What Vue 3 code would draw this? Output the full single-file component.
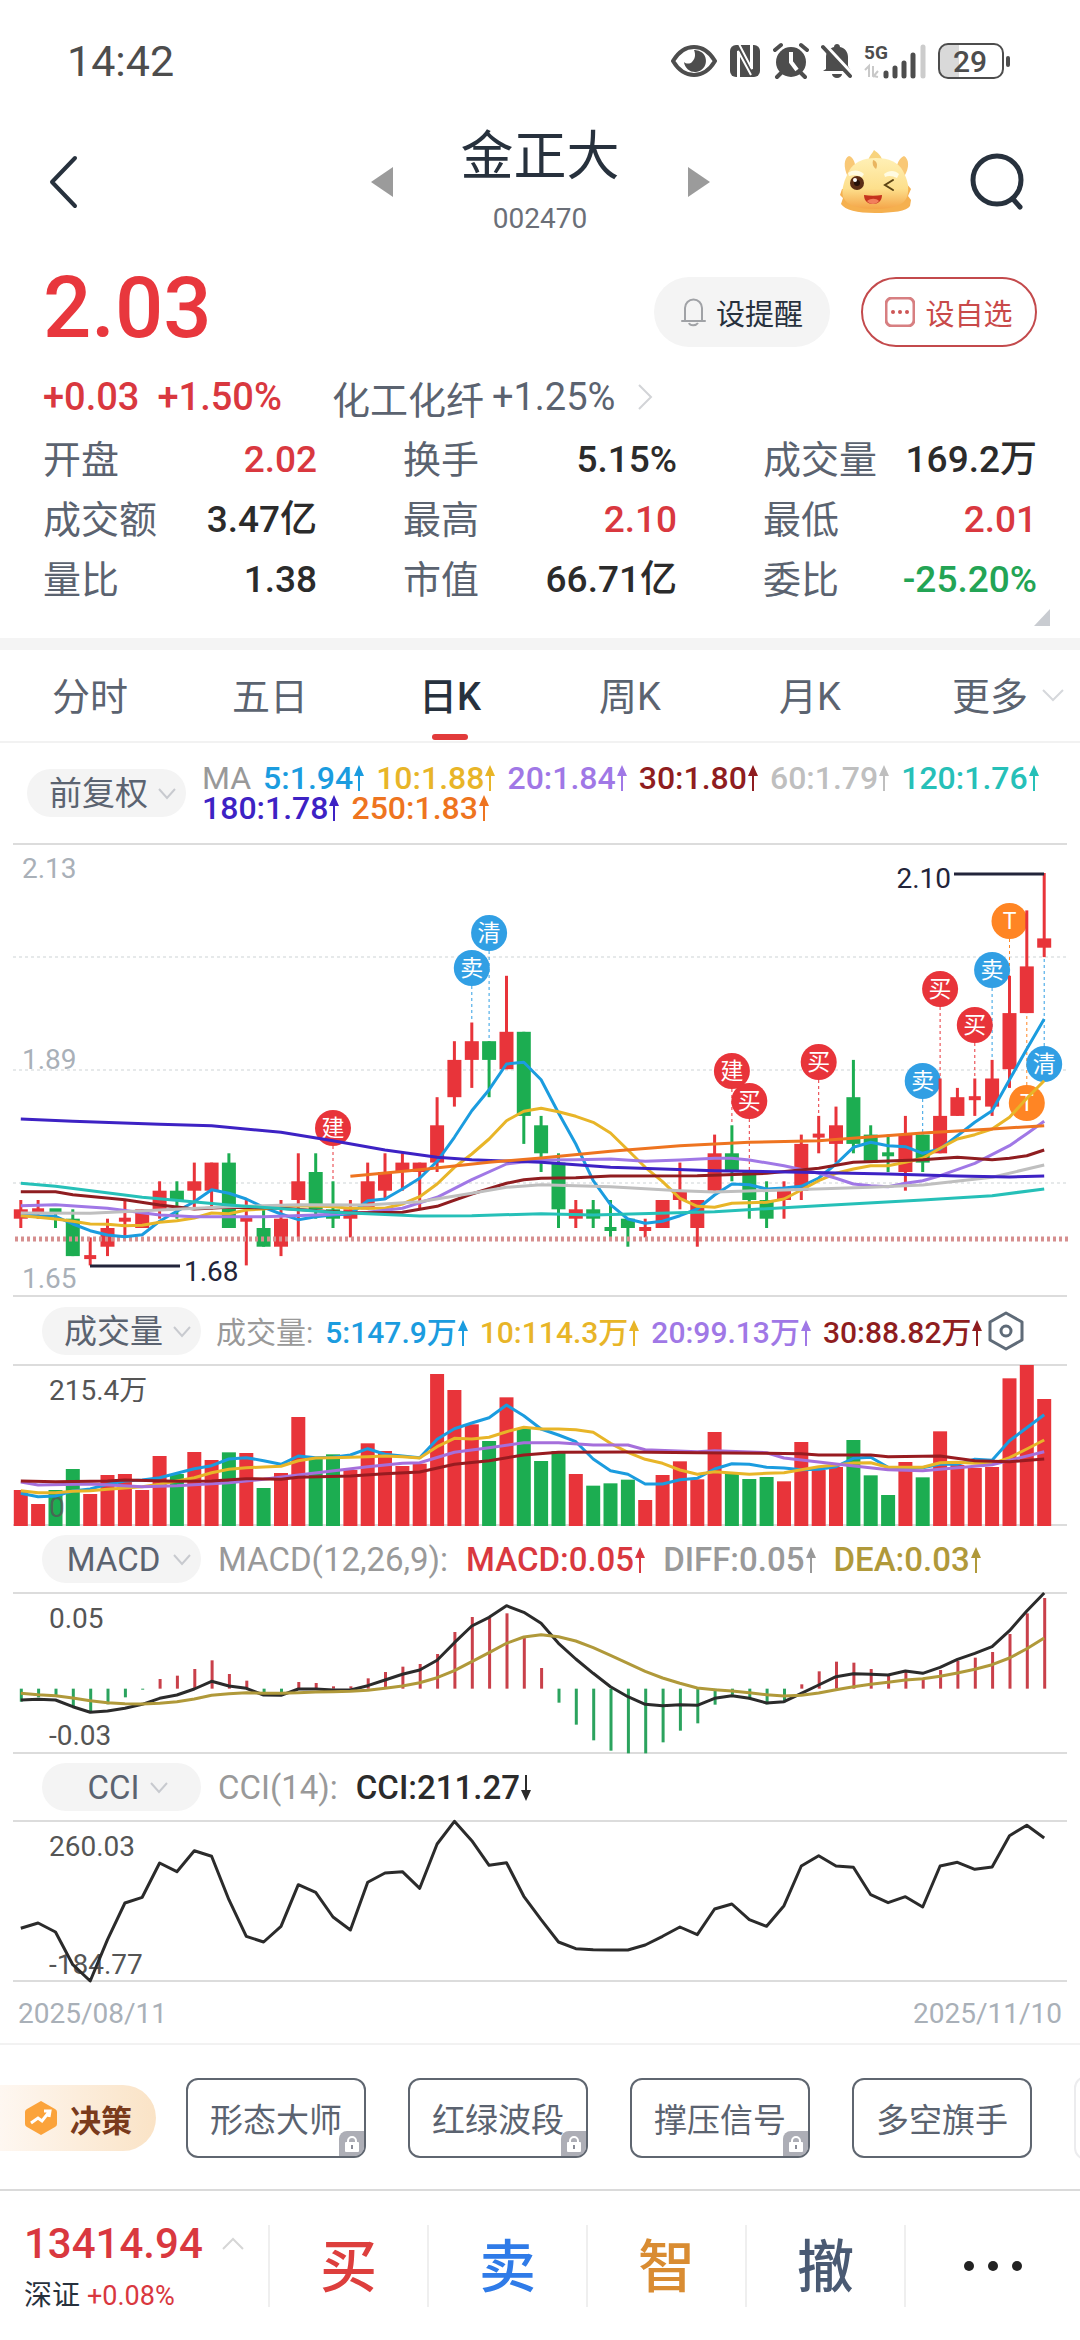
<script setup>
const RED = '#e8343a'
const GREEN = '#1cad51'

const stats = [
  { label: '开盘', value: '2.02', tone: 'up' },
  { label: '换手', value: '5.15%' },
  { label: '成交量', value: '169.2万' },
  { label: '成交额', value: '3.47亿' },
  { label: '最高', value: '2.10', tone: 'up' },
  { label: '最低', value: '2.01', tone: 'up' },
  { label: '量比', value: '1.38' },
  { label: '市值', value: '66.71亿' },
  { label: '委比', value: '-25.20%', tone: 'down' },
]

const tabs = ['分时', '五日', '日K', '周K', '月K', '更多']

const maLegend = [
  [
    { text: '5:1.94', color: '#1b9cdf' },
    { text: '10:1.88', color: '#e8b528' },
    { text: '20:1.84', color: '#a078e6' },
    { text: '30:1.80', color: '#8f1d20' },
    { text: '60:1.79', color: '#bfbfbf' },
    { text: '120:1.76', color: '#26c0b8' },
  ],
  [
    { text: '180:1.78', color: '#3d22c4' },
    { text: '250:1.83', color: '#ee7420' },
  ],
]
const volLegend = [
  { text: '5:147.9万', color: '#1b9cdf' },
  { text: '10:114.3万', color: '#e8b528' },
  { text: '20:99.13万', color: '#a078e6' },
  { text: '30:88.82万', color: '#8f1d20' },
]
const macdLegend = [
  { text: 'MACD:0.05', color: '#d9383f' },
  { text: 'DIFF:0.05', color: '#999999' },
  { text: 'DEA:0.03', color: '#b0993a' },
]

/* Sixty sessions share one horizontal axis. */
const x = (i) => Math.round((20.8 + 17.345 * i) * 10) / 10
/* Price in cents to plot height. */
const py = (cents) => Math.round((30 + (210 - cents) * 9.343) * 10) / 10

/* direction, body top, body bottom, high, low (cents) */
const candles = [
  ['R', 174, 173, 175, 172], ['R', 174, 174, 175, 173], ['G', 174, 174, 174, 172], ['G', 173, 169, 174, 169],
  ['R', 169, 169, 171, 168], ['R', 172, 170, 173, 169], ['R', 173, 173, 175, 171], ['R', 174, 172, 174, 172],
  ['R', 176, 174, 177, 173], ['G', 176, 175, 177, 173], ['R', 177, 176, 179, 174], ['R', 179, 176, 179, 174],
  ['G', 179, 172, 180, 172], ['R', 173, 173, 175, 168], ['G', 172, 170, 174, 170], ['R', 173, 170, 175, 169],
  ['R', 177, 175, 180, 171], ['G', 178, 174, 180, 173], ['G', 174, 173, 177, 172], ['R', 174, 173, 175, 171],
  ['R', 177, 174, 179, 174], ['R', 178, 176, 180, 175], ['R', 179, 178, 180, 176], ['R', 179, 178, 179, 174],
  ['R', 183, 179, 186, 178], ['R', 190, 186, 192, 185], ['R', 192, 190, 194, 187], ['G', 192, 190, 192, 186],
  ['R', 193, 189, 199, 189], ['G', 193, 184, 193, 181], ['G', 183, 180, 184, 178], ['G', 179, 174, 180, 172],
  ['R', 174, 173, 175, 172], ['G', 174, 173, 175, 172], ['G', 172, 172, 175, 171], ['G', 173, 172, 173, 170],
  ['R', 172, 172, 173, 171], ['R', 175, 172, 175, 172], ['R', 176, 175, 179, 174], ['R', 175, 172, 175, 170],
  ['R', 180, 176, 182, 176], ['G', 180, 178, 183, 177], ['G', 178, 175, 178, 173], ['G', 175, 173, 177, 172],
  ['R', 176, 175, 177, 173], ['R', 181, 176, 182, 175], ['R', 182, 182, 184, 180], ['R', 183, 181, 185, 179],
  ['G', 186, 181, 190, 180], ['G', 182, 179, 183, 179], ['G', 180, 180, 182, 178], ['R', 182, 178, 184, 176],
  ['G', 182, 179, 182, 178], ['R', 184, 180, 188, 180], ['R', 186, 184, 187, 184], ['R', 186, 186, 188, 184],
  ['R', 188, 185, 190, 184], ['R', 195, 189, 199, 187], ['R', 200, 195, 206, 195], ['R', 203, 202, 210, 201],
].map(([dir, top, bottom, high, low], i) => {
  const doji = top === bottom
  return {
    i,
    color: dir === 'R' ? RED : GREEN,
    bodyX: x(i) - (doji ? 6 : 7),
    bodyW: doji ? 12 : 14,
    bodyY: doji ? py(top) - 1 : py(top),
    bodyH: doji ? 4 : py(bottom) - py(top),
    wickY: py(high),
    wickH: py(low) - py(high),
  }
})

/* Series are sampled in thirds of a unit; `zero` is the sample at the plot's top edge. */
const points = (samples, zero) =>
  samples
    .map((s, i) => (Array.isArray(s) ? s : [i, s]))
    .map(([i, v]) => `${x(i)},${((v - zero) / 3).toFixed(1)}`)
    .join(' ')

const priceLines = [
  { color: '#1b9cdf', pts: [1157, 1160, 1162, 1185, 1205, 1218, 1223, 1217, 1177, 1147, 1118, 1082, 1093, 1110, 1135, 1155, 1172, 1163, 1158, 1155, 1115, 1110, 1080, 1048, 997, 925, 845, 782, 705, 700, 752, 852, 945, 1055, 1127, 1170, 1183, 1177, 1160, 1140, 1098, 1065, 1067, 1080, 1077, 1072, 1047, 1005, 955, 940, 950, 953, 973, 960, 920, 880, 845, 752, 660, 570] },
  { color: '#e8b528', pts: [1160, 1165, 1170, 1177, 1185, 1186, 1190, 1189, 1180, 1175, 1167, 1152, 1154, 1143, 1140, 1132, 1130, 1131, 1133, 1138, 1138, 1138, 1125, 1103, 1065, 1015, 975, 930, 875, 847, 838, 848, 862, 880, 912, 963, 1015, 1058, 1108, 1132, 1135, 1123, 1121, 1120, 1110, 1083, 1055, 1033, 1020, 1010, 1010, 1000, 988, 958, 930, 917, 900, 865, 808, 755] },
  { color: '#a078e6', pts: [[0, 1130], [2, 1127], [5, 1138], [8, 1158], [10, 1163], [14, 1163], [17, 1158], [20, 1150], [22, 1138], [24, 1105], [26, 1052], [28, 1005], [30, 993], [32, 992], [34, 990], [36, 997], [38, 993], [40, 988], [41, 988], [42, 993], [44, 1010], [46, 1033], [47, 1048], [48, 1065], [49, 1070], [50, 1073], [51, 1063], [52, 1055], [53, 1040], [55, 1003], [57, 950], [58, 914], [59, 877]] },
  { color: '#8f1d20', pts: [[0, 1088], [2, 1088], [3, 1097], [6, 1112], [8, 1128], [10, 1140], [12, 1135], [15, 1138], [19, 1152], [22, 1150], [24, 1132], [26, 1095], [28, 1063], [29, 1052], [30, 1048], [32, 1046], [34, 1041], [39, 1040], [43, 1033], [46, 1018], [48, 1000], [52, 992], [54, 985], [56, 992], [57, 988], [58, 980], [59, 963]] },
  { color: '#bfbfbf', pts: [[0, 1152], [4, 1153], [8, 1143], [12, 1133], [16, 1127], [20, 1128], [23, 1118], [26, 1093], [28, 1075], [30, 1067], [34, 1073], [38, 1085], [40, 1089], [44, 1083], [49, 1075], [52, 1068], [56, 1045], [59, 1008]] },
  { color: '#26c0b8', pts: [[0, 1063], [2, 1072], [7, 1105], [12, 1128], [18, 1150], [23, 1161], [26, 1160], [30, 1154], [33, 1158], [40, 1148], [46, 1130], [52, 1113], [56, 1100], [59, 1080]] },
  { color: '#3d22c4', pts: [[0, 870], [3, 877], [8, 886], [11, 890], [15, 910], [18, 935], [21, 963], [24, 985], [26, 992], [30, 1000], [34, 1015], [40, 1025], [45, 1030], [50, 1035], [54, 1041], [57, 1044], [59, 1041]] },
  { color: '#ee7420', pts: [[19, 1042], [23, 1022], [27, 1000], [30, 987], [34, 967], [38, 950], [42, 940], [46, 935], [52, 912], [56, 900], [59, 890]] },
].map((l) => ({ color: l.color, points: points(l.pts, 42) }))

/* session, badge centre, guide end */
const BLUE = '#319fe4'
const ORANGE = '#ff8524'
const markers = [
  { i: 18, text: '建', color: RED, y: 285, to: 339 },
  { i: 26, text: '卖', color: BLUE, y: 125, to: 179 },
  { i: 27, text: '清', color: BLUE, y: 90, to: 198 },
  { i: 41, text: '建', color: RED, y: 228, to: 282 },
  { i: 42, text: '买', color: RED, y: 258, to: 330 },
  { i: 46, text: '买', color: RED, y: 219, to: 273 },
  { i: 52, text: '卖', color: BLUE, y: 238, to: 292 },
  { i: 53, text: '买', color: RED, y: 146, to: 235 },
  { i: 55, text: '买', color: RED, y: 182, to: 235 },
  { i: 56, text: '卖', color: BLUE, y: 127, to: 217 },
  { i: 57, text: 'T', color: ORANGE, y: 78, to: 133 },
  { i: 58, text: 'T', color: ORANGE, y: 260, to: 169 },
  { i: 59, text: '清', color: BLUE, y: 221, to: 114 },
]

const volBars = [600, 642, 600, 537, 612, 555, 552, 600, 498, 552, 486, 510, 487, 489, 594, 549, 381, 505, 493, 540, 460, 483, 528, 521, 252, 300, 403, 453, 322, 416, 513, 483, 552, 587, 580, 569, 630, 555, 514, 568, 426, 552, 567, 561, 574, 456, 540, 531, 450, 556, 615, 516, 562, 424, 525, 534, 531, 265, 225, 327].map(
  (v, i) => ({ i, x: x(i) - 7, y: (v - 225) / 3, h: 161 - (v - 225) / 3, color: candles[i].color }),
)
const volLines = [
  { color: '#1b9cdf', pts: [610, 620, 618, 603, 597, 583, 573, 570, 563, 550, 536, 527, 507, 503, 512, 523, 498, 503, 502, 495, 476, 493, 498, 503, 448, 416, 399, 383, 345, 377, 417, 435, 455, 507, 542, 553, 582, 582, 569, 565, 537, 521, 523, 532, 534, 539, 538, 530, 505, 502, 532, 533, 533, 523, 523, 508, 511, 452, 413, 374] },
  { color: '#e8b528', pts: [602, 608, 608, 604, 602, 598, 594, 590, 583, 573, 563, 548, 538, 533, 531, 529, 512, 504, 503, 502, 500, 498, 500, 504, 470, 445, 447, 442, 425, 412, 417, 417, 419, 427, 460, 487, 508, 520, 540, 553, 545, 549, 553, 550, 548, 539, 530, 525, 519, 518, 532, 532, 532, 518, 517, 520, 521, 503, 477, 450] },
  { color: '#a56fdb', pts: [[0, 576], [1, 585], [4, 582], [7, 590], [9, 587], [12, 578], [14, 568], [16, 555], [20, 530], [22, 520], [23, 518], [25, 487], [27, 473], [29, 458], [31, 458], [33, 465], [35, 465], [36, 479], [39, 485], [40, 482], [43, 488], [44, 504], [47, 522], [50, 539], [52, 542], [54, 533], [56, 524], [59, 485]] },
  { color: '#981b20', pts: [[0, 573], [2, 575], [5, 573], [6, 570], [9, 574], [11, 573], [13, 566], [15, 568], [16, 562], [19, 558], [21, 551], [23, 546], [25, 523], [27, 512], [29, 495], [31, 487], [35, 486], [39, 488], [43, 490], [45, 491], [46, 495], [49, 495], [50, 500], [53, 498], [55, 512], [57, 515], [59, 507]] },
].map((l) => ({ color: l.color, points: points(l.pts, 225) }))

const macdBars = [1235, 1222, 1220, 1250, 1265, 1243, 1222, 1199, 1167, 1157, 1137, 1111, 1152, 1172, 1214, 1215, 1176, 1179, 1189, 1189, 1165, 1146, 1130, 1122, 1092, 1026, 981, 982, 970, 1044, 1134, 1238, 1304, 1351, 1382, 1390, 1390, 1357, 1322, 1300, 1244, 1214, 1228, 1243, 1237, 1183, 1144, 1115, 1118, 1137, 1155, 1146, 1165, 1140, 1112, 1103, 1086, 1032, 970, 924].map(
  (v, i) => {
    const zero = (1196 - 909) / 3
    const end = (v - 909) / 3
    return { i, x: x(i) - 1, y: Math.min(zero, end), h: Math.abs(zero - end), color: end < zero ? '#c9404a' : '#2ba35e' }
  },
)
const diffLine = points([1230, 1228, 1230, 1250, 1267, 1263, 1255, 1243, 1225, 1215, 1197, 1174, 1188, 1195, 1215, 1216, 1197, 1197, 1200, 1200, 1187, 1170, 1153, 1140, 1111, 1058, 1008, 982, 947, 967, 1000, 1060, 1107, 1150, 1190, 1220, 1243, 1247, 1244, 1246, 1225, 1217, 1225, 1239, 1235, 1210, 1185, 1160, 1151, 1153, 1155, 1143, 1150, 1132, 1108, 1090, 1070, 1022, 963, 909], 909)
const deaLine = points([1210, 1214, 1217, 1224, 1232, 1238, 1241, 1242, 1240, 1235, 1227, 1216, 1211, 1208, 1210, 1210, 1208, 1206, 1205, 1204, 1201, 1195, 1188, 1178, 1163, 1142, 1115, 1088, 1060, 1041, 1034, 1040, 1053, 1073, 1096, 1120, 1144, 1164, 1180, 1194, 1199, 1203, 1208, 1214, 1218, 1216, 1209, 1199, 1190, 1183, 1177, 1170, 1166, 1159, 1149, 1138, 1124, 1104, 1076, 1044], 909)
const cciLine = points([506, 490, 517, 615, 664, 540, 430, 413, 310, 336, 273, 290, 420, 530, 547, 500, 375, 398, 472, 511, 368, 340, 336, 386, 253, 185, 243, 317, 309, 410, 480, 547, 567, 570, 571, 571, 556, 530, 502, 525, 448, 433, 480, 500, 438, 319, 288, 319, 323, 405, 429, 411, 442, 319, 308, 329, 322, 228, 197, 235], 184)

const tools = [
  { name: '形态大师', locked: true },
  { name: '红绿波段', locked: true },
  { name: '撑压信号', locked: true },
  { name: '多空旗手', locked: false },
]
const actions = [
  { name: '买', color: '#dd3f3d' },
  { name: '卖', color: '#2f7be8' },
  { name: '智', color: '#d98c32' },
  { name: '撤', color: '#4a5a73' },
]
</script>

<template>
  <div class="page">
    <div class="status">
      <span class="clock">14:42</span>
      <div class="status-icons">
        <svg width="46" height="38" viewBox="0 0 46 38">
          <path d="M2 19C8 9 15 5 23 5s15 4 21 14c-6 10-13 14-21 14S8 29 2 19z" fill="none" stroke="#4d4d4d" stroke-width="4" />
          <path d="M23 8a11 11 0 1 1-10 12c2 2 6 2 8 0 3-3 4-7 2-12z" fill="#4d4d4d" />
        </svg>
        <svg width="32" height="38" viewBox="0 0 32 38">
          <rect x="1" y="3" width="30" height="32" rx="6" fill="#4d4d4d" />
          <path d="M9 36V9l13 24M10 2l13 25V2" fill="none" stroke="#fff" stroke-width="2" />
          <path d="M10 10v26M22 2v24" stroke="#fff" stroke-width="2" />
        </svg>
        <svg width="36" height="38" viewBox="0 0 36 38">
          <circle cx="18" cy="20" r="15" fill="#4d4d4d" />
          <path d="M2 8l6-5M34 8l-6-5M8 31l-4 4M28 31l4 4" stroke="#4d4d4d" stroke-width="4" stroke-linecap="round" />
          <path d="M18 10v10l6 8" fill="none" stroke="#fff" stroke-width="4" />
        </svg>
        <svg width="31" height="38" viewBox="0 0 31 38">
          <path d="M5 27V15C5 9 9 6 13 5c0-4 6-4 6 0 5 1 8 5 8 10v9l3 5H2z" fill="#4d4d4d" />
          <path d="M11 32h10a5 4 0 0 1-10 0z" fill="#4d4d4d" />
          <path d="M5 4l27 29" stroke="#fff" stroke-width="4" />
          <path d="M2 5l27 29" stroke="#4d4d4d" stroke-width="4" stroke-linecap="round" />
        </svg>
        <svg width="62" height="38" viewBox="0 0 62 38">
          <text x="0" y="17" font-size="19" font-weight="700" fill="#4d4d4d">5G</text>
          <path d="M1 28l4-4v11M14 35l-5-1V24M9 35l5-6" fill="none" stroke="#c9c9c9" stroke-width="2" />
          <path d="M22 31v3M31 26v8M40 21v13M49 13v21" stroke="#4d4d4d" stroke-width="5" stroke-linecap="round" />
          <path d="M59 5v29" stroke="#cccccc" stroke-width="5" stroke-linecap="round" />
        </svg>
        <svg width="73" height="38" viewBox="0 0 73 38">
          <path d="M10 2h11v34H10a8 8 0 0 1-8-8V10a8 8 0 0 1 8-8z" fill="#d9d9d9" />
          <rect x="1" y="2" width="64" height="34" rx="9" fill="none" stroke="#4d4d4d" stroke-width="2" />
          <rect x="68" y="14" width="4" height="11" rx="2" fill="#4d4d4d" />
          <text x="32" y="30" text-anchor="middle" font-size="30" font-weight="500" fill="#4d4d4d">29</text>
        </svg>
      </div>
    </div>

    <header class="header">
      <button class="icon-btn back" aria-label="返回">
        <svg width="32" height="56" viewBox="0 0 32 56"><path d="M27 4L4 28l23 24" fill="none" stroke="#27313d" stroke-width="4" stroke-linecap="round" stroke-linejoin="round" /></svg>
      </button>
      <div class="switcher">
        <button class="icon-btn" aria-label="上一只">
          <svg width="22" height="30" viewBox="0 0 22 30"><path d="M22 0v30L0 15z" fill="#9b9b9b" /></svg>
        </button>
        <div class="name">
          <h1>金正大</h1>
          <p>002470</p>
        </div>
        <button class="icon-btn" aria-label="下一只">
          <svg width="22" height="30" viewBox="0 0 22 30"><path d="M0 0v30l22-15z" fill="#9b9b9b" /></svg>
        </button>
      </div>
      <div class="header-right">
        <button class="icon-btn" aria-label="助手">
          <svg width="74" height="66" viewBox="0 0 74 66">
            <defs>
              <linearGradient id="skin" x1="0" y1="0" x2="0" y2="1">
                <stop offset="0" stop-color="#fff0b5" />
                <stop offset="0.6" stop-color="#fddf8c" />
                <stop offset="1" stop-color="#f4a548" />
              </linearGradient>
            </defs>
            <path d="M3 40l-2 6 3 3-2 6c4 6 16 9 34 9s32-2 35-7l1-6-3-4 3-7-5-6z" fill="#f5b04f" />
            <path d="M9 28C4 18 5 9 10 7c4 1 6 6 7 13zM65 28c6-10 5-18 0-21-5 2-7 8-8 14z" fill="#f9c876" />
            <path d="M29 14c0-6 4-9 6-13 4 3 8 6 9 13z" fill="#f8d37c" />
            <path d="M10 22c5-9 14-13 27-13s22 4 27 13c4 8 7 16 4 26-3 8-14 12-31 12S8 57 4 48c-2-9 2-18 6-26z" fill="url(#skin)" />
            <path d="M34 11c4 1 5 5 3 9-3-2-4-5-3-9z" fill="#e9b55f" />
            <path d="M9 24c5-4 12-3 16 1l-2 3c-5-2-9-2-13-1zM45 25c5-4 11-4 15 0l-2 4c-4-2-8-3-12-1z" fill="#fffbe2" />
            <circle cx="18" cy="34" r="7" fill="#5b2d16" />
            <circle cx="18" cy="34" r="3" fill="#25100a" />
            <circle cx="16" cy="31" r="2" fill="#fff" />
            <path d="M54 31l-8 5 8 5" fill="none" stroke="#5c4414" stroke-width="2" stroke-linecap="round" />
            <path d="M25 46c6 1 12 1 18 0 0 6-4 9-9 9s-9-3-9-9z" fill="#c5331d" />
            <path d="M28 52c4-3 9-3 12 0-3 4-9 4-12 0z" fill="#f27f5c" />
          </svg>
        </button>
        <button class="icon-btn" aria-label="搜索">
          <svg width="54" height="58" viewBox="0 0 54 58">
            <circle cx="27" cy="27" r="24" fill="none" stroke="#27313d" stroke-width="5" />
            <path d="M43 46l7 8" stroke="#27313d" stroke-width="5" stroke-linecap="round" />
          </svg>
        </button>
      </div>
    </header>

    <section class="quote">
      <div class="price-row">
        <strong class="price">2.03</strong>
        <div class="price-actions">
          <button class="round-btn grey">
            <svg width="25" height="30" viewBox="0 0 25 30">
              <path d="M1 24h23M4 24V11a8 8 0 0 1 17 0v13" fill="none" stroke="#a0a2a6" stroke-width="2" stroke-linecap="round" />
              <path d="M8 26c1 3 7 3 9 0" fill="none" stroke="#a0a2a6" stroke-width="2" />
            </svg>
            设提醒
          </button>
          <button class="round-btn outline">
            <svg width="30" height="30" viewBox="0 0 30 30">
              <rect x="1" y="1" width="28" height="28" rx="6" fill="none" stroke="#d77f81" stroke-width="3" />
              <circle cx="8" cy="15" r="2" fill="#cd5656" /><circle cx="15" cy="15" r="2" fill="#cd5656" /><circle cx="22" cy="15" r="2" fill="#cd5656" />
            </svg>
            设自选
          </button>
        </div>
      </div>
      <div class="change-row">
        <span class="up">+0.03</span>
        <span class="up">+1.50%</span>
        <a href="#" class="sector">
          <span>化工化纤</span><span>+1.25%</span>
          <svg width="16" height="28" viewBox="0 0 16 28"><path d="M2 2l12 12L2 26" fill="none" stroke="#d2d4d7" stroke-width="2" /></svg>
        </a>
      </div>
      <dl class="stats">
        <div v-for="s in stats" :key="s.label" class="stat">
          <dt>{{ s.label }}</dt>
          <dd :class="s.tone">{{ s.value }}</dd>
        </div>
      </dl>
      <svg class="fold" width="16" height="17" viewBox="0 0 16 17"><path d="M16 0v17H0z" fill="#c9ccd1" /></svg>
    </section>

    <nav class="tabs">
      <button v-for="t in tabs" :key="t" class="tab" :class="{ active: t === '日K' }">
        {{ t }}
        <svg v-if="t === '更多'" class="tab-chevron" width="24" height="14" viewBox="0 0 24 14"><path d="M2 2l10 10L22 2" fill="none" stroke="#d6d8dc" stroke-width="2" /></svg>
      </button>
    </nav>

    <main>
      <div class="bar ma-bar">
        <div class="pill">
          <select aria-label="复权方式"><option>前复权</option></select>
          <svg width="20" height="12" viewBox="0 0 20 12"><path d="M2 1l8 9 8-9" fill="none" stroke="#c8cacf" stroke-width="2" /></svg>
        </div>
        <div class="ma-legend">
          <div v-for="(row, r) in maLegend" :key="r" class="legend-row">
            <span v-if="r === 0" class="muted">MA</span>
            <span v-for="m in row" :key="m.text" class="legend" :style="{ color: m.color }">{{ m.text }}<svg class="arrow" viewBox="0 0 10 26"><path d="M5 0l5 11H6v15H4V11H0z" fill="currentColor" /></svg></span>
          </div>
        </div>
      </div>

      <svg class="plot" viewBox="0 0 1080 454">
        <path d="M13 1H1067" stroke="#dcdcdc" stroke-width="2" />
        <path d="M13 453H1067" stroke="#dcdcdc" stroke-width="2" />
        <path d="M13 114H1067M13 227H1067M13 340H1067" stroke="#cdd3d5" stroke-width="1" stroke-dasharray="3 3" />
        <g class="scale" fill="#a9b0b8">
          <text x="22" y="35">2.13</text>
          <text x="22" y="226">1.89</text>
          <text x="22" y="445">1.65</text>
        </g>
        <g v-for="m in markers" :key="m.i">
          <path :d="`M${x(m.i)} ${m.y}V${m.to}`" :stroke="m.color" stroke-width="1" stroke-dasharray="3 3" />
        </g>
        <g v-for="m in markers" :key="'b' + m.i">
          <circle :cx="x(m.i)" :cy="m.y" r="18" :fill="m.color" />
          <text class="badge" :x="x(m.i)" :y="m.y + 8" text-anchor="middle">{{ m.text }}</text>
        </g>
        <g v-for="c in candles" :key="c.i" :fill="c.color">
          <rect :x="x(c.i) - 1.5" :y="c.wickY" width="3" :height="c.wickH" />
          <rect :x="c.bodyX" :y="c.bodyY" :width="c.bodyW" :height="c.bodyH" />
        </g>
        <path d="M15 396H1069" stroke="#d68f8f" stroke-width="5" stroke-dasharray="3 3" />
        <polyline v-for="l in priceLines" :key="l.color" :points="l.points" :stroke="l.color" class="line" />
        <path d="M90 423H180M954 31H1044" stroke="#22243a" stroke-width="3" />
        <g class="scale" fill="#22243a">
          <text x="184" y="438">1.68</text>
          <text x="951" y="45" text-anchor="end">2.10</text>
        </g>
      </svg>

      <div class="bar">
        <div class="pill">
          <select aria-label="副图一"><option>成交量</option></select>
          <svg width="20" height="12" viewBox="0 0 20 12"><path d="M2 1l8 9 8-9" fill="none" stroke="#c8cacf" stroke-width="2" /></svg>
        </div>
        <div class="legend-row vol">
          <span class="muted">成交量:</span>
          <span v-for="m in volLegend" :key="m.text" class="legend" :style="{ color: m.color }">{{ m.text }}<svg class="arrow" viewBox="0 0 10 26"><path d="M5 0l5 11H6v15H4V11H0z" fill="currentColor" /></svg></span>
        </div>
        <button class="icon-btn" aria-label="指标设置">
          <svg width="36" height="40" viewBox="0 0 36 40">
            <path d="M18 2l16 9v18l-16 9L2 29V11z" fill="none" stroke="#5f6b78" stroke-width="3" stroke-linejoin="round" />
            <circle cx="18" cy="20" r="5" fill="none" stroke="#5f6b78" stroke-width="3" />
          </svg>
        </button>
      </div>

      <svg class="plot" viewBox="0 0 1080 160">
        <path d="M13 0H1067M13 160H1067" stroke="#dcdcdc" stroke-width="2" />
        <text class="scale" x="49" y="35" fill="#555">215.4万</text>
        <rect v-for="b in volBars" :key="b.i" :x="b.x" :y="b.y" width="14" :height="b.h" :fill="b.color" />
        <text class="scale" x="49" y="152" fill="#555" fill-opacity="0.8">0</text>
        <polyline v-for="l in volLines" :key="l.color" :points="l.points" :stroke="l.color" class="line" />
      </svg>

      <div class="bar">
        <div class="pill">
          <select aria-label="副图二"><option>MACD</option></select>
          <svg width="20" height="12" viewBox="0 0 20 12"><path d="M2 1l8 9 8-9" fill="none" stroke="#c8cacf" stroke-width="2" /></svg>
        </div>
        <div class="legend-row wide">
          <span class="muted">MACD(12,26,9):</span>
          <span v-for="m in macdLegend" :key="m.text" class="legend" :style="{ color: m.color }">{{ m.text }}<svg class="arrow" viewBox="0 0 10 26"><path d="M5 0l5 11H6v15H4V11H0z" fill="currentColor" /></svg></span>
        </div>
      </div>

      <svg class="plot" viewBox="0 0 1080 160">
        <path d="M13 0H1067M13 160H1067" stroke="#dcdcdc" stroke-width="2" />
        <g class="scale" fill="#555">
          <text x="49" y="35">0.05</text>
          <text x="49" y="152">-0.03</text>
        </g>
        <rect v-for="b in macdBars" :key="b.i" :x="b.x" :y="b.y" width="3" :height="b.h" :fill="b.color" />
        <polyline :points="diffLine" stroke="#2b2b2b" class="line" />
        <polyline :points="deaLine" stroke="#b0993a" class="line" />
      </svg>

      <div class="bar">
        <div class="pill short">
          <select aria-label="副图三"><option>CCI</option></select>
          <svg width="20" height="12" viewBox="0 0 20 12"><path d="M2 1l8 9 8-9" fill="none" stroke="#c8cacf" stroke-width="2" /></svg>
        </div>
        <div class="legend-row wide">
          <span class="muted">CCI(14):</span>
          <span class="legend dark">CCI:211.27<svg class="arrow" viewBox="0 0 10 26"><path d="M5 26L0 15h4V0h2v15h4z" fill="currentColor" /></svg></span>
        </div>
      </div>

      <svg class="plot" viewBox="0 0 1080 160">
        <path d="M13 0H1067M13 160H1067" stroke="#dcdcdc" stroke-width="2" />
        <g class="scale" fill="#555">
          <text x="49" y="35">260.03</text>
          <text x="49" y="153">-184.77</text>
        </g>
        <polyline :points="cciLine" stroke="#2b2b2b" class="line" />
      </svg>

      <div class="dates"><time>2025/08/11</time><time>2025/11/10</time></div>
    </main>

    <div class="tools">
      <button class="decision">
        <svg width="34" height="36" viewBox="0 0 34 36">
          <path d="M17 1l14 8q2 1 2 3v12q0 2-2 3l-14 8L3 27q-2-1-2-3V12q0-2 2-3z" fill="#fba33b" />
          <path d="M7 23l7-5 4 3 7-9M20 11l6 0-1 6" fill="none" stroke="#fff" stroke-width="3" />
        </svg>
        决策
      </button>
      <button v-for="t in tools" :key="t.name" class="tool">
        {{ t.name }}
        <span v-if="t.locked" class="lock">
          <svg width="14" height="16" viewBox="0 0 14 16">
            <rect x="0" y="6" width="14" height="10" rx="1" fill="#fff" />
            <path d="M3 7V5a4 4 0 0 1 8 0v2" fill="none" stroke="#fff" stroke-width="2" />
            <path d="M7 9v4" stroke="#8b8d98" stroke-width="2" />
          </svg>
        </span>
      </button>
      <span class="peek"></span>
    </div>

    <footer class="dock">
      <button class="index">
        <span class="index-value">13414.94
          <svg width="24" height="14" viewBox="0 0 24 14"><path d="M2 12L12 2l10 10" fill="none" stroke="#d6d6d6" stroke-width="2" /></svg>
        </span>
        <span class="index-name">深证 <em>+0.08%</em></span>
      </button>
      <button v-for="a in actions" :key="a.name" class="action word" :style="{ color: a.color }">{{ a.name }}</button>
      <button class="action" aria-label="更多操作">
        <svg width="62" height="12" viewBox="0 0 62 12"><circle cx="7" cy="6" r="5" fill="#222" /><circle cx="31" cy="6" r="5" fill="#222" /><circle cx="55" cy="6" r="5" fill="#222" /></svg>
      </button>
    </footer>
  </div>
</template>

<style>
body {
  background: #fff;
}
</style>

<style scoped>
.page {
  font-family: Roboto, "Noto Sans CJK SC", sans-serif;
  color: #27313d;
  background: #fff;
  overflow: hidden;
}
button,
select {
  font: inherit;
  color: inherit;
  background: none;
  border: 0;
  padding: 0;
  margin: 0;
}
svg {
  display: block;
  flex: none;
}
.icon-btn {
  display: flex;
}
.up {
  color: #d9383f;
}

.status {
  display: flex;
  align-items: center;
  justify-content: space-between;
  height: 122px;
  padding: 0 69px 0 67px;
}
.clock {
  font-size: 43px;
  color: #4d4d4d;
}
.status-icons {
  display: flex;
  gap: 12px;
}

.header {
  display: grid;
  grid-template-columns: 1fr auto 1fr;
  align-items: center;
  padding: 0 48px;
}
.switcher {
  display: flex;
  align-items: center;
  gap: 68px;
}
.name {
  text-align: center;
}
.name h1 {
  margin: 0;
  padding-top: 2px;
  font-size: 53px;
  font-weight: 400;
  line-height: 66px;
}
.name p {
  margin: 6px 0 0;
  font-size: 28px;
  line-height: 46px;
  color: #6b6f78;
}
.header-right {
  display: flex;
  align-items: center;
  justify-content: flex-end;
  gap: 57px;
  padding-right: 8px;
}

.quote {
  position: relative;
  padding: 12px 43px 28px;
  border-bottom: 12px solid #f4f4f4;
}
.price-row {
  display: flex;
  justify-content: space-between;
  height: 116px;
}
.price {
  font-size: 85px;
  font-weight: 500;
  line-height: 108px;
  color: #e8373d;
}
.price-actions {
  display: flex;
  align-items: center;
  gap: 31px;
}
.round-btn {
  display: flex;
  align-items: center;
  justify-content: center;
  gap: 10px;
  width: 176px;
  height: 70px;
  border-radius: 35px;
  font-size: 29px;
}
.round-btn.grey {
  background: #f4f4f4;
}
.round-btn.outline {
  border: 2px solid #c34a4c;
  color: #c94a4a;
}
.change-row {
  display: flex;
  align-items: center;
  gap: 18px;
  height: 54px;
  font-size: 38px;
  white-space: nowrap;
}
.change-row .up {
  font-weight: 500;
}
.sector {
  display: flex;
  align-items: center;
  gap: 8px;
  margin-left: 32px;
  color: #5b6370;
  text-decoration: none;
}
.sector svg {
  margin-left: 14px;
}
.stats {
  display: grid;
  grid-template-columns: repeat(3, 1fr);
  column-gap: 86px;
  margin: 6px 0 0;
}
.stat {
  display: flex;
  justify-content: space-between;
  line-height: 60px;
  font-size: 38px;
  white-space: nowrap;
}
.stat dt {
  color: #5b6370;
}
.stat dd {
  margin: 0;
  font-size: 37px;
  font-weight: 500;
  color: #2b2b2b;
}
.stat dd.up {
  color: #d9383f;
}
.stat dd.down {
  color: #23a455;
}
.fold {
  position: absolute;
  right: 30px;
  bottom: 12px;
}

.tabs {
  display: flex;
  border-bottom: 2px solid #f2f2f2;
}
.tab {
  position: relative;
  flex: 1;
  height: 91px;
  padding-bottom: 4px;
  font-size: 38px;
  color: #5b6370;
}
.tab.active {
  color: #27313d;
  font-weight: 500;
}
.tab.active::after {
  content: "";
  position: absolute;
  left: calc(50% - 18px);
  bottom: 1px;
  width: 36px;
  height: 6px;
  border-radius: 3px;
  background: #e23b3b;
}
.tab-chevron {
  position: absolute;
  right: 15px;
  top: 38px;
}

.bar {
  display: flex;
  align-items: center;
  height: 68px;
  padding-left: 42px;
  white-space: nowrap;
}
.ma-bar {
  height: 100px;
  padding-left: 27px;
}
.pill {
  position: relative;
  flex: none;
  width: 159px;
}
.pill select {
  display: block;
  appearance: none;
  width: 100%;
  height: 48px;
  padding-right: 16px;
  border-radius: 24px;
  background: #f4f4f4;
  font-size: 33px;
  color: #5b6370;
  text-align: center;
  text-align-last: center;
}
.pill svg {
  position: absolute;
  right: 9px;
  top: 19px;
  pointer-events: none;
}
.pill.short svg {
  right: 32px;
}
.ma-legend {
  margin-left: 16px;
}
.legend-row {
  display: flex;
  align-items: center;
  gap: 12px;
  line-height: 30px;
  font-size: 32px;
}
.legend-row.vol {
  margin: 0 6px 0 15px;
  padding-top: 4px;
  font-size: 30px;
}
.legend-row.wide {
  gap: 18px;
  margin-left: 17px;
  padding-top: 2px;
  font-size: 33px;
}
.legend {
  display: flex;
  align-items: center;
  gap: 1px;
  font-weight: 500;
}
.arrow {
  width: 10px;
  height: 26px;
}
.muted {
  color: #999;
}
.dark {
  color: #2b2b2b;
}
.plot {
  width: 100%;
  height: auto;
  overflow: visible;
}
.scale {
  font-size: 28px;
}
.badge {
  font-size: 23px;
  fill: #fff;
}
.line {
  fill: none;
  stroke-width: 3;
  stroke-linejoin: round;
}
.dates {
  display: flex;
  justify-content: space-between;
  padding: 4px 18px 0;
  line-height: 58px;
  font-size: 28px;
  color: #a9b0b8;
  border-bottom: 2px solid #f2f2f2;
}

.tools {
  display: flex;
  align-items: center;
  gap: 42px;
  height: 142px;
  padding-top: 2px;
  overflow: hidden;
  white-space: nowrap;
}
.decision {
  display: flex;
  align-items: center;
  justify-content: center;
  flex: none;
  gap: 12px;
  width: 156px;
  height: 66px;
  margin-right: -12px;
  border-radius: 0 33px 33px 0;
  background: linear-gradient(90deg, #fef7f1, #fae3c6);
  font-size: 31px;
  font-weight: 700;
  color: #7a3b1c;
}
.tool {
  position: relative;
  flex: none;
  width: 180px;
  height: 80px;
  border: 2px solid #5f6670;
  border-radius: 12px;
  font-size: 33px;
  color: #5b6370;
}
.lock {
  position: absolute;
  right: 0;
  bottom: 0;
  display: flex;
  align-items: center;
  justify-content: center;
  width: 25px;
  height: 25px;
  border-radius: 8px 0 9px 0;
  background: #adaeb6;
}
.peek {
  flex: none;
  width: 180px;
  height: 80px;
  border: 2px solid #ececee;
  border-radius: 12px;
}

.dock {
  display: grid;
  grid-template-columns: 268fr 159fr 159fr 159fr 159fr 176fr;
  align-items: center;
  height: 150px;
  border-top: 2px solid #dadada;
}
.index {
  padding: 6px 0 0 24px;
  text-align: left;
  white-space: nowrap;
}
.index-value {
  display: flex;
  align-items: center;
  gap: 18px;
  font-size: 42px;
  font-weight: 500;
  line-height: 54px;
  color: #d9383f;
}
.index-name {
  display: block;
  font-size: 28px;
  line-height: 50px;
}
.index-name em {
  font-style: normal;
  font-size: 27px;
  color: #d9383f;
}
.action {
  display: flex;
  align-items: center;
  justify-content: center;
  height: 82px;
  border-left: 2px solid #efefef;
}
.word {
  padding-bottom: 8px;
  font-size: 57px;
  font-weight: 500;
}
</style>
